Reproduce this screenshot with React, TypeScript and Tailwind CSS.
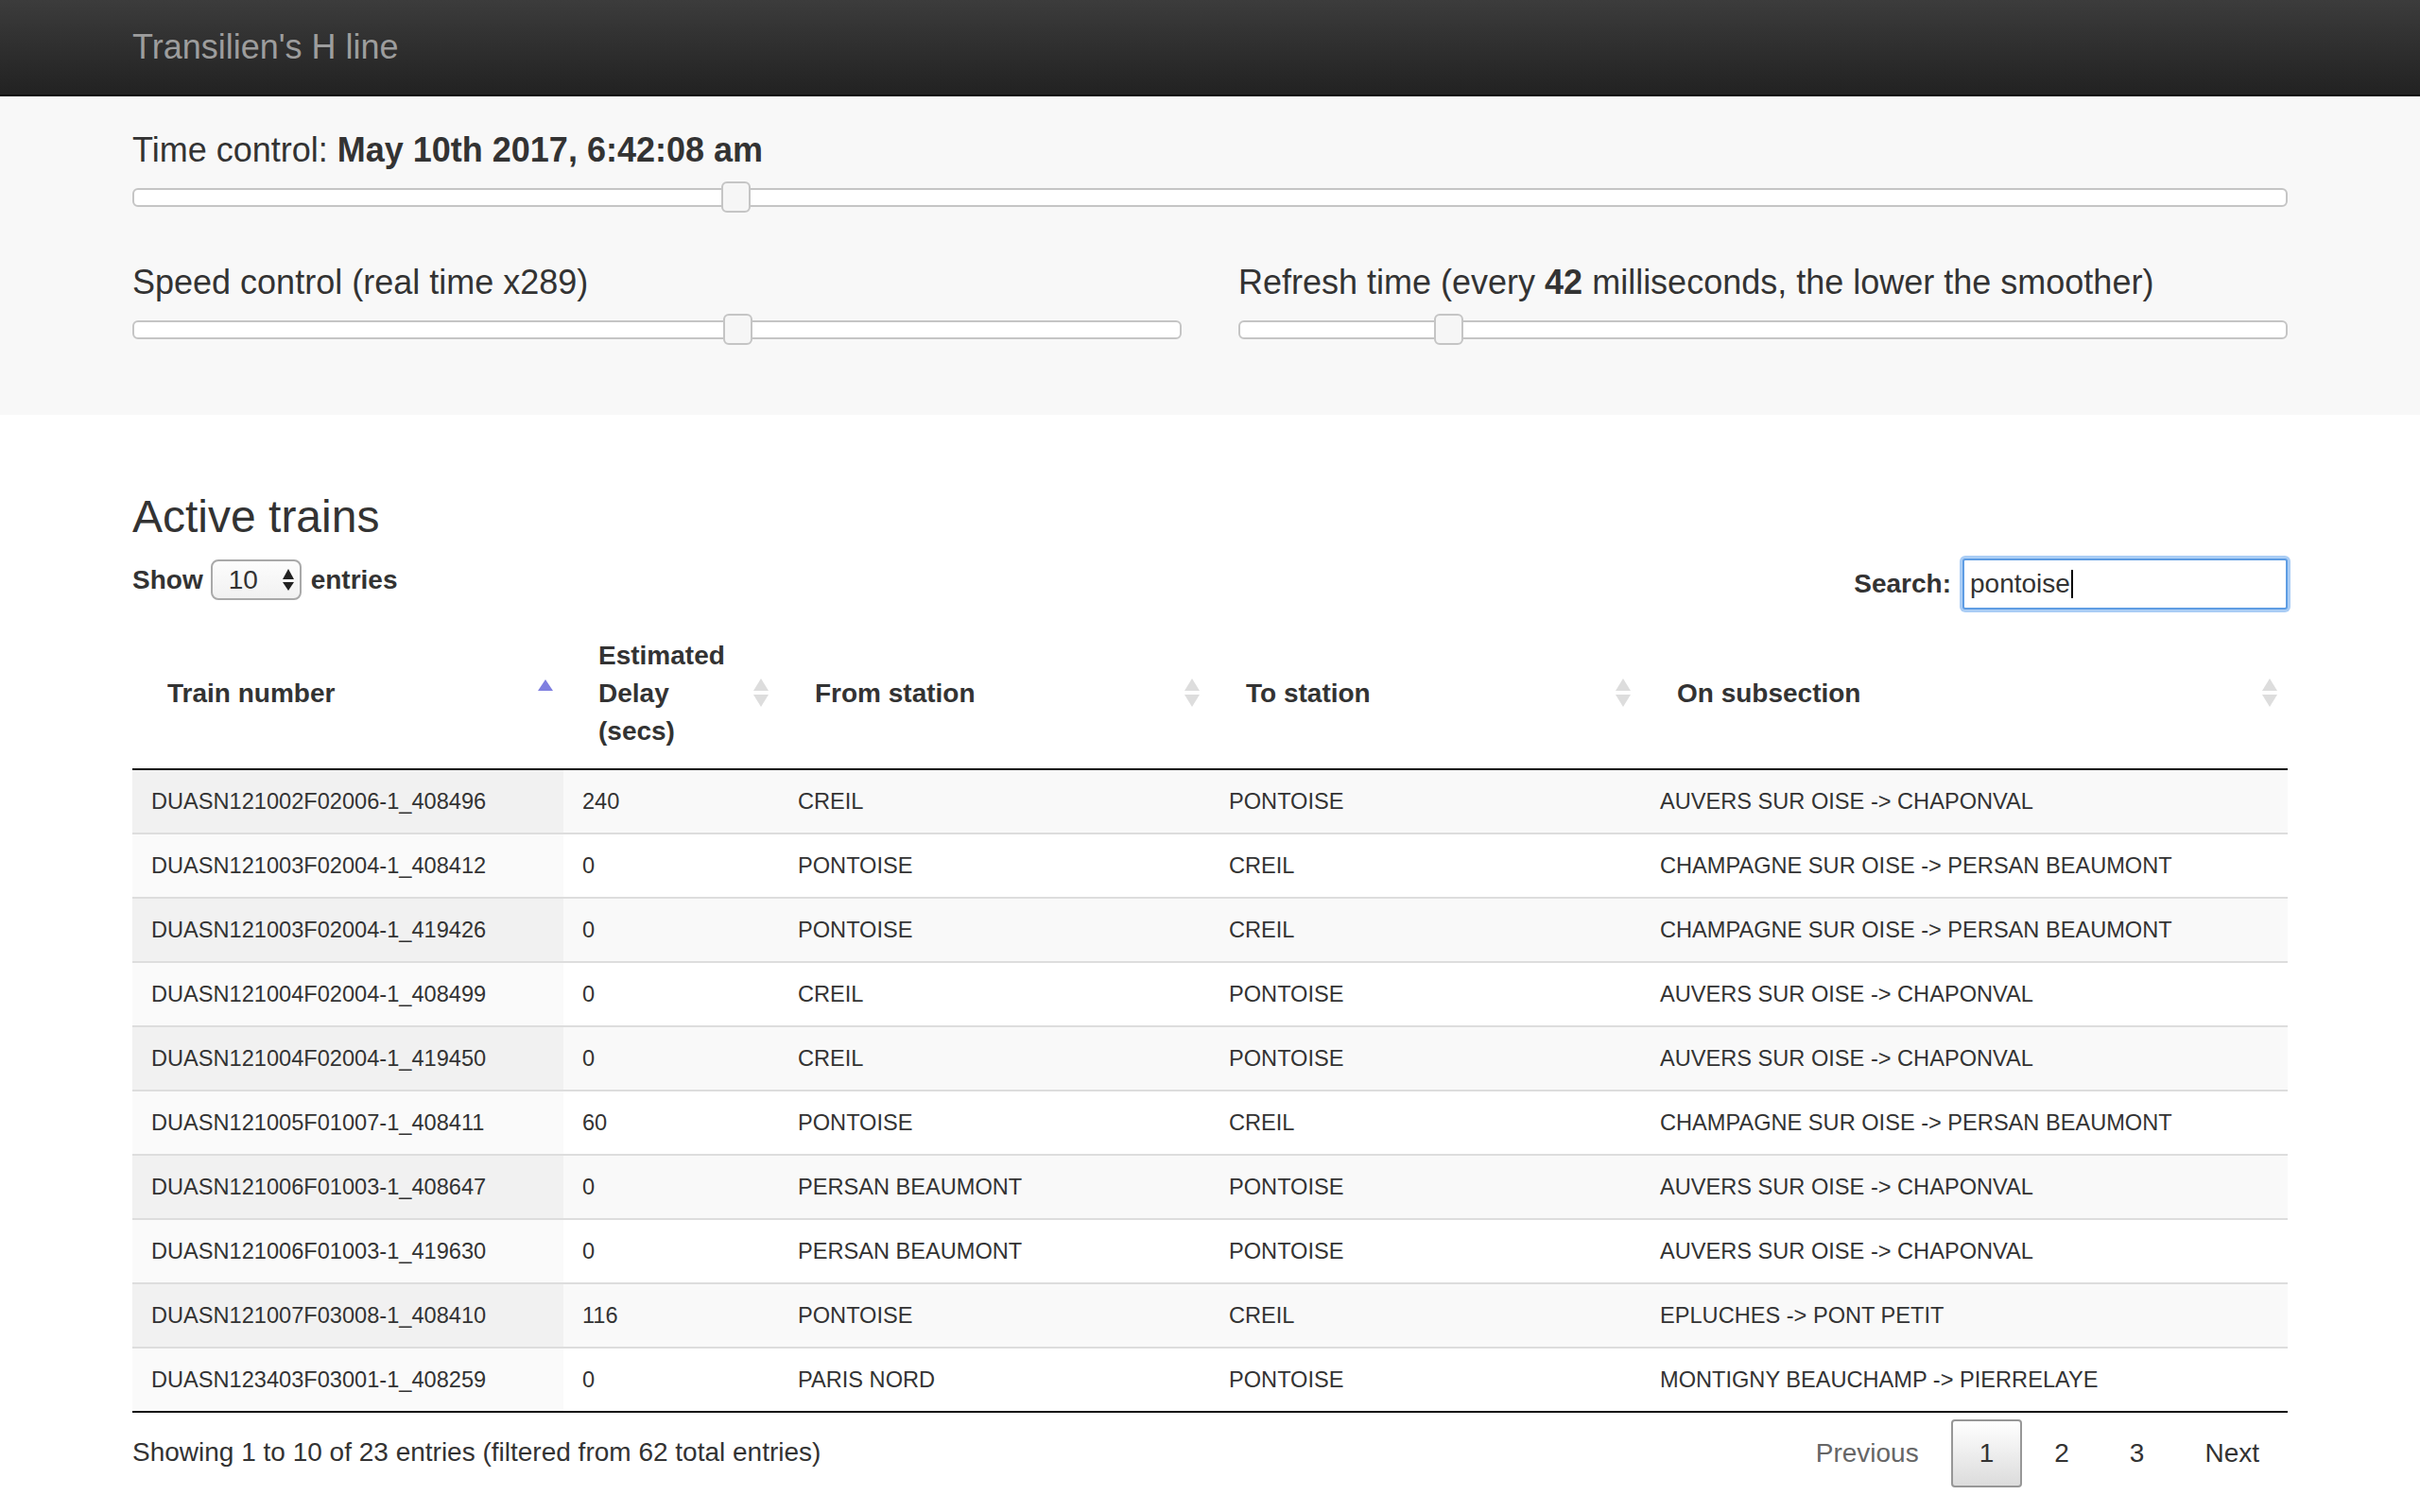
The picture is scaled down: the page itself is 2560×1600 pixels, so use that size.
const rows = [
  ['DUASN121002F02006-1_408496', '240', 'CREIL', 'PONTOISE', 'AUVERS SUR OISE -> CHAPONVAL'],
  ['DUASN121003F02004-1_408412', '0', 'PONTOISE', 'CREIL', 'CHAMPAGNE SUR OISE -> PERSAN BEAUMONT'],
  ['DUASN121003F02004-1_419426', '0', 'PONTOISE', 'CREIL', 'CHAMPAGNE SUR OISE -> PERSAN BEAUMONT'],
  ['DUASN121004F02004-1_408499', '0', 'CREIL', 'PONTOISE', 'AUVERS SUR OISE -> CHAPONVAL'],
  ['DUASN121004F02004-1_419450', '0', 'CREIL', 'PONTOISE', 'AUVERS SUR OISE -> CHAPONVAL'],
  ['DUASN121005F01007-1_408411', '60', 'PONTOISE', 'CREIL', 'CHAMPAGNE SUR OISE -> PERSAN BEAUMONT'],
  ['DUASN121006F01003-1_408647', '0', 'PERSAN BEAUMONT', 'PONTOISE', 'AUVERS SUR OISE -> CHAPONVAL'],
  ['DUASN121006F01003-1_419630', '0', 'PERSAN BEAUMONT', 'PONTOISE', 'AUVERS SUR OISE -> CHAPONVAL'],
  ['DUASN121007F03008-1_408410', '116', 'PONTOISE', 'CREIL', 'EPLUCHES -> PONT PETIT'],
  ['DUASN123403F03001-1_408259', '0', 'PARIS NORD', 'PONTOISE', 'MONTIGNY BEAUCHAMP -> PIERRELAYE'],
];

function Slider({ handle }: { handle: string }) {
  return (
    <div className="relative h-[20px] rounded-[6px] border-2 border-[#c5c5c5] bg-white">
      <div
        className={`absolute top-[-9px] h-[33px] w-[31px] rounded-[6px] border-2 border-[#c5c5c5] bg-[#f6f6f6] ${handle}`}
      />
    </div>
  );
}

function SortIcon({ active }: { active?: boolean }) {
  return (
    <svg className="absolute right-[11px] top-[57px]" width="16" height="30" viewBox="0 0 16 30">
      {active ? (
        <path d="M8 1 L16 13 L0 13 Z" fill="#7f7fe0" />
      ) : (
        <>
          <path d="M8 0 L16 13 L0 13 Z" fill="#dddddd" />
          <path d="M0 17 L16 17 L8 30 Z" fill="#dddddd" />
        </>
      )}
    </svg>
  );
}

export default function App() {
  return (
    <div className="min-h-screen bg-white pb-[200px] font-['Liberation_Sans',Arial,sans-serif] text-[#333]">
      {/* navbar */}
      <nav className="h-[102px] border-b-2 border-[#080808] bg-gradient-to-b from-[#3c3c3c] to-[#222]">
        <div className="mx-auto flex h-full w-[2280px] items-center">
          <span className="text-[36px] leading-[40px] text-[#9d9d9d]">Transilien's H line</span>
        </div>
      </nav>

      {/* controls */}
      <section className="bg-[#f8f8f8] pb-[80px] pt-[37px]">
        <div className="mx-auto w-[2280px]">
          <h4 className="text-[36px] leading-[40px]">
            Time control: <b>May 10th 2017, 6:42:08 am</b>
          </h4>
          <div className="mt-[20px]">
            <Slider handle="left-[621px]" />
          </div>
          <div className="mt-[60px] grid grid-cols-2 gap-x-[60px]">
            <div>
              <h4 className="text-[36px] leading-[40px]">Speed control (real time x289)</h4>
              <div className="mt-[20px]">
                <Slider handle="left-[623px]" />
              </div>
            </div>
            <div>
              <h4 className="text-[36px] leading-[40px]">
                Refresh time (every <b>42</b> milliseconds, the lower the smoother)
              </h4>
              <div className="mt-[20px]">
                <Slider handle="left-[205px]" />
              </div>
            </div>
          </div>
        </div>
      </section>

      {/* active trains */}
      <section className="mx-auto w-[2280px] pt-[82px]">
        <h3 className="text-[48px] leading-[52px]">Active trains</h3>

        <div className="mt-[17px] flex items-start justify-between text-[28px] leading-[40px]">
          <div className="mt-[2px] flex h-[43px] items-center">
            <b>Show</b>
            <div className="ml-[8px] flex h-[43px] w-[96px] items-center rounded-[8px] border-2 border-[#a9a9a9] bg-gradient-to-b from-[#fdfdfd] to-[#f1f1f1] pl-[17px]">
              <span className="w-[57px]">10</span>
              <svg width="12" height="24" viewBox="0 0 12 24">
                <path d="M6 0 L12 11 L0 11 Z" fill="#222" />
                <path d="M0 14 L12 14 L6 23 Z" fill="#222" />
              </svg>
            </div>
            <b className="ml-[10px]">entries</b>
          </div>

          <div className="mt-[1px] flex h-[54px] items-center">
            <b>Search:</b>
            <div className="ml-[12px] flex h-[54px] w-[344px] items-center rounded-[3px] border-2 border-[#5f9de3] bg-white pl-[6px] shadow-[0_0_0_3px_#aacdf5]">
              <span>pontoise</span>
              <span className="ml-[1px] h-[30px] w-[2px] bg-black" />
            </div>
          </div>
        </div>

        <table className="mt-[16px] w-full table-fixed border-collapse">
          <colgroup>
            <col className="w-[456px]" />
            <col className="w-[228px]" />
            <col className="w-[456px]" />
            <col className="w-[456px]" />
            <col className="w-[684px]" />
          </colgroup>
          <thead>
            <tr className="border-b-2 border-[#111] text-left text-[28px] font-bold leading-[40px]">
              <th className="relative pb-[19px] pl-[37px] pt-[13px] align-middle">
                Train number
                <SortIcon active />
              </th>
              <th className="relative pb-[19px] pl-[37px] pt-[13px] align-middle">
                Estimated
                <br />
                Delay
                <br />
                (secs)
                <SortIcon />
              </th>
              <th className="relative pb-[19px] pl-[38px] pt-[13px] align-middle">
                From station
                <SortIcon />
              </th>
              <th className="relative pb-[19px] pl-[38px] pt-[13px] align-middle">
                To station
                <SortIcon />
              </th>
              <th className="relative pb-[19px] pl-[38px] pt-[13px] align-middle">
                On subsection
                <SortIcon />
              </th>
            </tr>
          </thead>
          <tbody className="text-[23.6px] leading-[34px]">
            {rows.map((r, i) => {
              const odd = i % 2 === 0;
              return (
                <tr
                  key={r[0]}
                  className={`${i > 0 ? 'border-t-2 border-[#ddd]' : ''} ${odd ? 'bg-[#f9f9f9]' : 'bg-white'}`}
                >
                  {r.map((c, j) => (
                    <td
                      key={j}
                      className={`px-[20px] py-[16px] whitespace-nowrap ${
                        j === 0 ? (odd ? 'bg-[#f1f1f1]' : 'bg-[#fafafa]') : ''
                      }`}
                    >
                      {c}
                    </td>
                  ))}
                </tr>
              );
            })}
          </tbody>
        </table>
        <div className="h-[2px] bg-[#111]" />

        {/* footer */}
        <div className="flex items-start justify-between text-[28px] leading-[40px]">
          <div className="pt-[22px]">Showing 1 to 10 of 23 entries (filtered from 62 total entries)</div>
          <div className="flex gap-[4px] pt-[7px]">
            <span className="rounded-[4px] border-2 border-transparent px-[28px] py-[14px] text-[#666]">Previous</span>
            <span className="rounded-[4px] border-2 border-[#979797] bg-gradient-to-b from-white to-[#dcdcdc] px-[28px] py-[14px]">
              1
            </span>
            <span className="rounded-[4px] border-2 border-transparent px-[28px] py-[14px]">2</span>
            <span className="rounded-[4px] border-2 border-transparent px-[28px] py-[14px]">3</span>
            <span className="rounded-[4px] border-2 border-transparent px-[28px] py-[14px]">Next</span>
          </div>
        </div>
      </section>
    </div>
  );
}
